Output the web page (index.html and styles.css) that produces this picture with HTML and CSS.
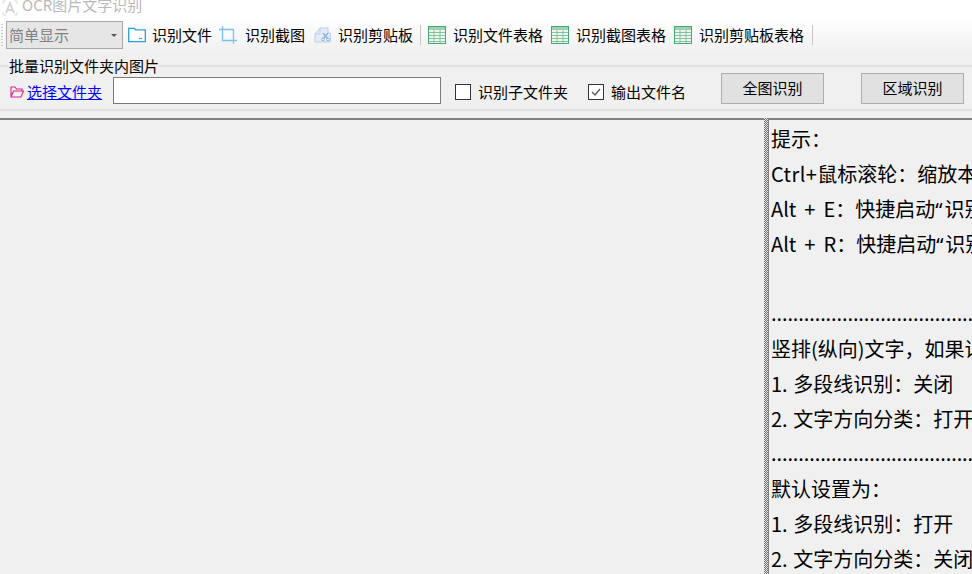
FILE: index.html
```html
<!DOCTYPE html>
<html lang="zh-CN">
<head>
<meta charset="utf-8">
<title>OCR图片文字识别</title>
<link rel="stylesheet" href="styles.css">
</head>
<body>
<div class="app">
  <header class="titlebar">
    <svg class="app-icon" width="16" height="16" viewBox="0 0 16 16"><path d="M1 1h3M1 1v3M15 1h-3M15 1v3M1 15h3M1 15v-3M15 15h-3M15 15v-3" fill="none" stroke="#e8e8e8" stroke-width="1.5"/><path d="M4 13 8 3l4 10M5.500 10h5" fill="none" stroke="#d2d2d2" stroke-width="1.800"/></svg>
    <span class="title-text">OCR图片文字识别</span>
  </header>

  <div class="toolbar">
    <span class="grip"></span>
    <div class="combo"><span>简单显示</span><i class="combo-arrow"></i></div>
    <button class="tool tool-first">
      <svg width="18" height="18" viewBox="0 0 18 18"><path d="M.7 15.700V2.300h5.800l1 1.500h9.800v11.900z" fill="#fff" stroke="#2c9fdf" stroke-width="1.300"/><path d="M11 12.500h3" stroke="#2c9fdf" stroke-width="1.200"/></svg>
      <span>识别文件</span>
    </button>
    <button class="tool tool-crop">
      <svg width="18" height="18" viewBox="0 0 18 18"><path d="M3.500 0v14.500H18M0 3.500h14.500V18" fill="none" stroke="#7cc0f0" stroke-width="1.300"/><path d="M5.500 5.500h7.500v7.500H5.500z" fill="#f6fbff"/></svg>
      <span>识别截图</span>
    </button>
    <button class="tool tool-clip">
      <svg width="18" height="18" viewBox="0 0 18 18"><path d="M1 8 6 2h8v5h2.500v9H1z" fill="#e3ecf8" stroke="#b9cfec"/><path d="M1 8h5V2" fill="none" stroke="#b9cfec"/><path d="m9 7 5 6M14 7l-5 6" stroke="#86abdc" stroke-width="1.200"/><circle cx="9" cy="13.500" r="1.300" fill="#fff" stroke="#86abdc"/><circle cx="14" cy="13.500" r="1.300" fill="#fff" stroke="#86abdc"/></svg>
      <span>识别剪贴板</span>
    </button>
    <span class="sep"></span>
    <button class="tool tool-table">
      <svg class="grid-icon" width="18" height="18" viewBox="0 0 18 18"><rect x=".5" y=".5" width="17" height="17" fill="#eef6ef" stroke="#43a878"/><rect x="1" y="1" width="16" height="3" fill="#9fd0b4"/><path d="M1 6.500h16M1 9.500h16M1 12.500h16M1 15.500h16M6 4v13M12 4v13" stroke="#84c3a0"/></svg>
      <span>识别文件表格</span>
    </button>
    <button class="tool tool-table">
      <svg class="grid-icon" width="18" height="18" viewBox="0 0 18 18"><rect x=".5" y=".5" width="17" height="17" fill="#eef6ef" stroke="#43a878"/><rect x="1" y="1" width="16" height="3" fill="#9fd0b4"/><path d="M1 6.500h16M1 9.500h16M1 12.500h16M1 15.500h16M6 4v13M12 4v13" stroke="#84c3a0"/></svg>
      <span>识别截图表格</span>
    </button>
    <button class="tool tool-table">
      <svg class="grid-icon" width="18" height="18" viewBox="0 0 18 18"><rect x=".5" y=".5" width="17" height="17" fill="#eef6ef" stroke="#43a878"/><rect x="1" y="1" width="16" height="3" fill="#9fd0b4"/><path d="M1 6.500h16M1 9.500h16M1 12.500h16M1 15.500h16M6 4v13M12 4v13" stroke="#84c3a0"/></svg>
      <span>识别剪贴板表格</span>
    </button>
    <span class="sep sep-end"></span>
  </div>

  <section class="batch">
    <div class="legend"><span class="legend-stub"></span><span class="legend-text">批量识别文件夹内图片</span><span class="legend-line"></span></div>
    <div class="batch-row">
      <svg class="pink-folder" width="14" height="12" viewBox="0 0 14 12"><path d="M1 11V1h4l1.500 2H12v2M1 11l2.500-6H13.500L11 11z" fill="none" stroke="#e0218a" stroke-width="1.100"/></svg>
      <a class="link" href="#">选择文件夹</a>
      <input class="path" type="text">
      <span class="check"></span>
      <span class="check-label">识别子文件夹</span>
      <span class="check checked"><svg width="14" height="14" viewBox="0 0 14 14"><path d="m3 7 3 3 5-6" fill="none" stroke="#555" stroke-width="1.300"/></svg></span>
      <span class="check-label">输出文件名</span>
      <button class="btn btn-whole">全图识别</button>
      <button class="btn btn-area">区域识别</button>
    </div>
  </section>

  <main class="split">
    <div class="pane-left"></div>
    <div class="splitter"></div>
    <div class="pane-right">
      <p>提示&#xFF1A;</p>
      <p><span class="latin">Ctrl+</span>鼠标滚轮&#xFF1A;缩放本文</p>
      <p class="shortcut">Alt + E&#xFF1A;快捷启动<span class="q">“</span>识别文件<span class="q">”</span></p>
      <p class="shortcut">Alt + R&#xFF1A;快捷启动<span class="q">“</span>识别截图<span class="q">”</span></p>
      <p>&nbsp;</p>
      <p class="dots">..............................................................</p>
      <p>竖排(纵向)文字&#xFF0C;如果识别</p>
      <p class="num">1. 多段线识别&#xFF1A;关闭</p>
      <p class="num">2. 文字方向分类&#xFF1A;打开</p>
      <p class="dots">..............................................................</p>
      <p>默认设置为&#xFF1A;</p>
      <p class="num">1. 多段线识别&#xFF1A;打开</p>
      <p class="num">2. 文字方向分类&#xFF1A;关闭</p>
    </div>
  </main>
</div>
</body>
</html>
```
FILE: styles.css
```css
* { box-sizing: border-box; }
html, body { margin: 0; height: 100%; overflow: hidden; }
body {
  background: #f0f0f0;
  color: #000;
  font: 15px/20px "Noto Sans CJK SC", "Noto Sans", sans-serif;
}
.app { display: flex; flex-direction: column; height: 574px; }

.titlebar {
  height: 17px;
  display: flex;
  align-items: flex-start;
  padding-left: 2px;
  background: #fff;
}
.app-icon { flex: none; }
.title-text { margin: -2px 0 0 4px; font-size: 15px; line-height: 14px; color: #b9b9b9; }

.toolbar {
  height: 41px;
  display: flex;
  align-items: center;
  padding-bottom: 5px;
  background: linear-gradient(#fff 0, #f0f0f0 90%);
}
.grip {
  width: 2px; height: 22px; margin-left: 1px;
  background: repeating-linear-gradient(#c8c8c8 0 1px, transparent 1px 3px);
}
.combo {
  width: 117px; height: 28px; margin-left: 3px;
  display: flex; align-items: center; justify-content: space-between;
  padding: 0 5px 0 2px;
  border: 1px solid #a8a8a8;
  background: #e6e6e6;
  color: #808080;
}
.combo-arrow { border: 3px solid transparent; border-top: 3px solid #555; margin-top: 3px; }
.tool {
  display: flex; align-items: center;
  padding: 0; border: 0; background: none;
  font: inherit; color: #000;
  white-space: nowrap;
}
.tool svg { flex: none; }
.tool span { margin-left: 6px; }
.tool-first { margin-left: 5px; }
.tool-crop { margin-left: 7px; }
.tool-crop span { margin-left: 8px; }
.tool-clip { margin-left: 9px; }
.tool-table { margin-left: 8px; }
.tool-table span { margin-left: 7px; }
.sep { width: 1px; height: 20px; margin-left: 7px; background: #c4c4c4; }
.sep + .tool-table { margin-left: 7px; }
.sep-end { margin-left: 8px; }

.batch { height: 53px; border-bottom: 2px solid #e2e2e2; }
.legend { display: flex; align-items: center; height: 16px; }
.legend-stub { width: 9px; height: 2px; background: #e2e2e2; }
.legend-line { flex: 1; height: 2px; background: #e2e2e2; }
.legend-text { line-height: 16px; }
.batch-row { display: flex; align-items: center; height: 31px; margin-top: -1px; }
.pink-folder { flex: none; margin: 6px 0 0 10px; }
.link { margin: 7px 0 0 3px; color: #00f; }
.path {
  width: 328px; height: 27px; margin: 4px 0 0 11px;
  padding: 0 4px;
  border: 1px solid #7a7a7a;
  background: #fff;
}
.check {
  flex: none; width: 16px; height: 16px; margin: 6px 0 0 14px;
  display: flex; align-items: center; justify-content: center;
  border: 1px solid #333;
  background: #fff;
}
.check.checked { margin-left: 20px; }
.check-label { margin: 6px 0 0 7px; white-space: nowrap; }
.btn {
  width: 103px; height: 31px; padding: 0 0 2px;
  border: 1px solid #adadad;
  background: #e1e1e1;
  font: inherit; color: #000;
}
.btn-whole { margin-left: 35px; }
.btn-area { margin-left: 37px; }

.split {
  flex: 1; min-height: 0;
  display: flex;
  margin-top: 7px;
  border-top: 2px solid #808080;
}
.pane-left { width: 764px; flex: none; }
.splitter {
  width: 4px; flex: none; margin-top: -2px;
  background: conic-gradient(#666 25%, #f0f0f0 0 50%, #666 0 75%, #f0f0f0 0) 0 0 / 2px 2px;
}
.pane-right {
  flex: 1; min-width: 0;
  overflow: hidden;
  border-left: 1px solid #808080;
  padding: 1px 0 0 2px;
  font-size: 20px;
  line-height: 35px;
  white-space: nowrap;
}
.pane-right p { margin: 0; height: 35px; }
.latin { letter-spacing: .4px; }
.shortcut { word-spacing: 3.5px; }
.num { word-spacing: 1px; }
.q { font-family: "Noto Sans", sans-serif; margin-right: 2px; }
.dots { letter-spacing: -.1px; line-height: 33px; }
```
